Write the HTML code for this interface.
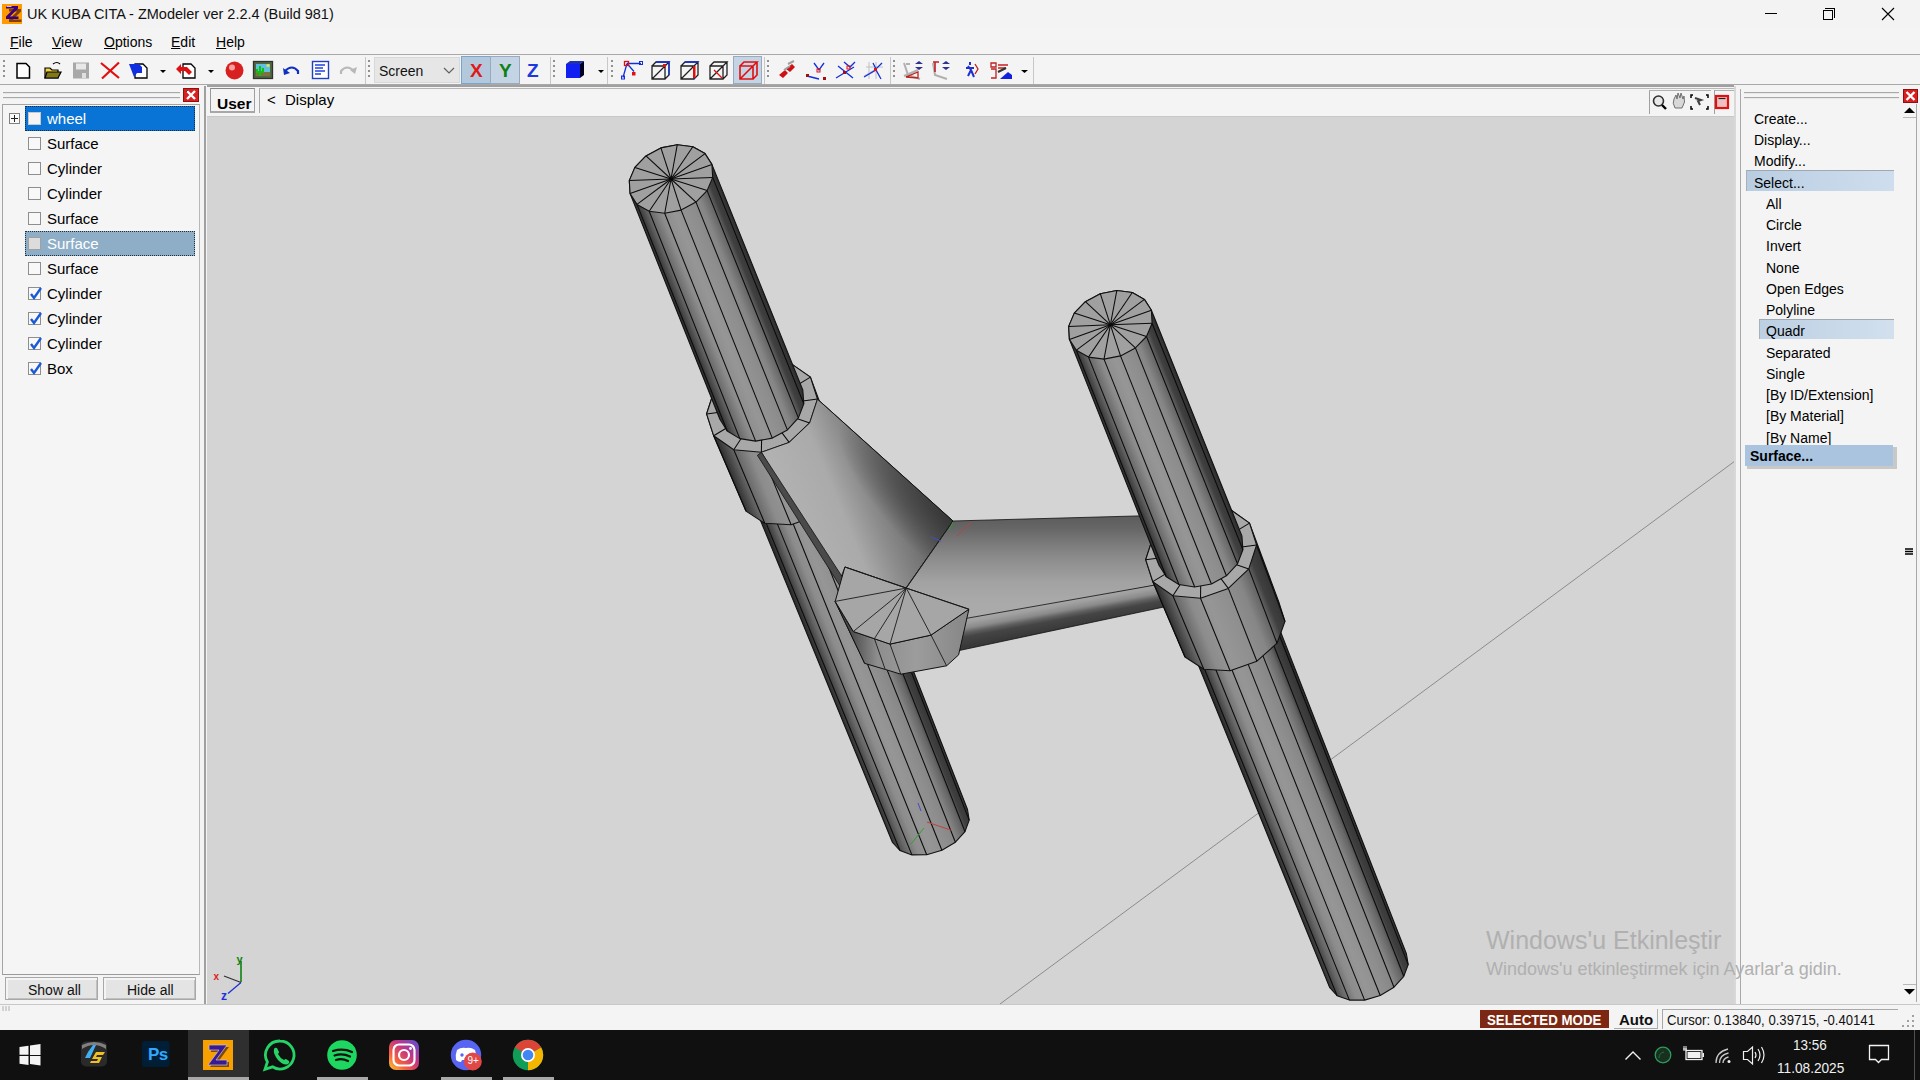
<!DOCTYPE html>
<html><head><meta charset="utf-8">
<style>
*{margin:0;padding:0;box-sizing:border-box}
html,body{width:1920px;height:1080px;overflow:hidden;background:#f4f4f4;font-family:"Liberation Sans",sans-serif;color:#000}
.a{position:absolute}
.t{position:absolute;white-space:nowrap;line-height:1}
#title{left:0;top:0;width:1920px;height:29px;background:#f3f3f3}
#menu{left:0;top:29px;width:1920px;height:26px;background:#f4f4f4;border-bottom:1px solid #a8a8a8}
#tool{left:0;top:55px;width:1920px;height:30px;background:#f4f4f4;border-bottom:1px solid #a8a8a8}
#left{left:0;top:86px;width:206px;height:918px;background:#f4f4f4;border-right:2px solid #a0a0a0}
#vp{left:207px;top:117px;width:1527px;height:887px;background:#d4d4d4;overflow:hidden}
#vphead{left:207px;top:85px;width:1527px;height:32px;background:#f4f4f4;border-top:2px solid #a0a0a0;border-bottom:1px solid #c8c8c8}
#right{left:1736px;top:86px;width:184px;height:918px;background:#f4f4f4}
#status{left:0;top:1004px;width:1920px;height:26px;background:#f4f4f4;border-top:1px solid #c8c8c8}
#task{left:0;top:1030px;width:1920px;height:50px;background:#101010}
.tree{font-size:15px}
.cb{position:absolute;width:13px;height:13px;border:1px solid #8e8e8e;background:#f8f8f8}
.rp{font-size:15px}
</style></head><body>

<!-- title bar -->
<div id="title" class="a">
  <svg class="a" style="left:2px;top:4px" width="20" height="20"><rect width="20" height="20" fill="#ff9a00"/><path d="M4 2h12v2.5l-8 8h8.5v2.5h-12.5v-2.5l8-8h-8z" fill="#804000" transform="translate(3,3)"/><path d="M4 2h12v2.5l-8 8h8.5v2.5h-12.5v-2.5l8-8h-8z" fill="#3a0080"/><path d="M4.5 2.5h5" stroke="#d8d8f0" stroke-width="0.9"/></svg>
  <div class="t" style="left:27px;top:7px;font-size:14.5px;color:#111">UK KUBA CITA - ZModeler ver 2.2.4 (Build 981)</div>
  <div class="a" style="left:1765px;top:13px;width:12px;height:1px;background:#000"></div>
  <div class="a" style="left:1823px;top:10px;width:10px;height:10px;border:1px solid #000"></div>
  <div class="a" style="left:1825px;top:8px;width:10px;height:10px;border-top:1px solid #000;border-right:1px solid #000"></div>
  <svg class="a" style="left:1881px;top:7px" width="14" height="14"><path d="M1 1L13 13M13 1L1 13" stroke="#000" stroke-width="1.1"/></svg>
</div>

<!-- menu -->
<div id="menu" class="a">
  <div class="t" style="left:10px;top:6px;font-size:14px"><u>F</u>ile</div>
  <div class="t" style="left:52px;top:6px;font-size:14px"><u>V</u>iew</div>
  <div class="t" style="left:104px;top:6px;font-size:14px"><u>O</u>ptions</div>
  <div class="t" style="left:171px;top:6px;font-size:14px"><u>E</u>dit</div>
  <div class="t" style="left:216px;top:6px;font-size:14px"><u>H</u>elp</div>
</div>

<!-- toolbar -->
<div id="tool" class="a">
<svg class="a" style="left:0;top:0" width="1100" height="30" viewBox="0 55 1100 30">
 <g fill="#909090">
  <rect x="3" y="60" width="2" height="2"/><rect x="3" y="65" width="2" height="2"/><rect x="3" y="70" width="2" height="2"/><rect x="3" y="75" width="2" height="2"/>
  <rect x="368" y="60" width="2" height="2"/><rect x="368" y="65" width="2" height="2"/><rect x="368" y="70" width="2" height="2"/><rect x="368" y="75" width="2" height="2"/>
  <rect x="553" y="60" width="2" height="2"/><rect x="553" y="65" width="2" height="2"/><rect x="553" y="70" width="2" height="2"/><rect x="553" y="75" width="2" height="2"/>
  <rect x="611" y="60" width="2" height="2"/><rect x="611" y="65" width="2" height="2"/><rect x="611" y="70" width="2" height="2"/><rect x="611" y="75" width="2" height="2"/>
  <rect x="767" y="60" width="2" height="2"/><rect x="767" y="65" width="2" height="2"/><rect x="767" y="70" width="2" height="2"/><rect x="767" y="75" width="2" height="2"/>
  <rect x="893" y="60" width="2" height="2"/><rect x="893" y="65" width="2" height="2"/><rect x="893" y="70" width="2" height="2"/><rect x="893" y="75" width="2" height="2"/>
 </g>
 <rect x="365" y="57" width="1" height="27" fill="#c8c8c8"/><rect x="550" y="57" width="1" height="27" fill="#c8c8c8"/><rect x="607" y="57" width="1" height="27" fill="#c8c8c8"/><rect x="764" y="57" width="1" height="27" fill="#c8c8c8"/><rect x="890" y="57" width="1" height="27" fill="#c8c8c8"/><rect x="1033" y="57" width="1" height="27" fill="#c8c8c8"/>
 <!-- new doc -->
 <path d="M17 63.5h9l3.5 3.5v11h-12.5z" fill="#fff" stroke="#000" stroke-width="1.5"/>
 <!-- open -->
 <path d="M45 68h5l2 2h6v8h-13z" fill="#f0d040" stroke="#000" stroke-width="1.2"/><path d="M47 72h14l-3 6h-13z" fill="#807818" stroke="#000" stroke-width="1.2"/><path d="M53 64q4-3 7 0" fill="none" stroke="#000" stroke-width="1.2"/>
 <!-- save gray -->
 <rect x="73" y="62.5" width="16" height="16" fill="#a8a8a8"/><rect x="76" y="63.5" width="10" height="6" fill="#e8e8e8"/><rect x="82" y="73" width="4" height="5" fill="#e0e0e0"/>
 <!-- red x -->
 <path d="M101 63l18 15M119 62.5l-17 16" stroke="#e01010" stroke-width="2.2"/>
 <!-- blue import -->
 <path d="M135 64h8l4 4v10h-12z" fill="#fff" stroke="#000" stroke-width="1.3"/><path d="M129 64h10l3 3v6h-5l-3 4z" fill="#1030e0"/>
 <path d="M160 70h6l-3 3z" fill="#000"/>
 <!-- red arrow doc -->
 <path d="M183 64h8l4 4v10h-12z" fill="#fff" stroke="#000" stroke-width="1.3"/><path d="M176 69l5-5v3h6l5 5-3 3-4-4h-4v3z" fill="#e01010"/>
 <path d="M208 70h6l-3 3z" fill="#000"/>
 <!-- red ball -->
 <circle cx="234.5" cy="70.5" r="9" fill="#d82020"/><circle cx="232" cy="67.5" r="3" fill="#f8a0a0"/>
 <!-- green image -->
 <rect x="253.5" y="61.5" width="19" height="17" fill="#506840" stroke="#303030" stroke-width="1.3"/><rect x="256" y="64" width="14" height="8" fill="#60c0e0"/><rect x="256" y="72" width="14" height="4" fill="#807040"/><path d="M260 76v-10M257 69v3h6v-4" stroke="#10c010" stroke-width="2" fill="none"/><circle cx="268" cy="65.5" r="1.6" fill="#f0e040"/>
 <!-- undo -->
 <path d="M285 71q7-7 13 0v3" fill="none" stroke="#1030c0" stroke-width="2.2"/><path d="M283 68l1 7 6-2z" fill="#1030c0"/>
 <!-- doc blue -->
 <rect x="312.5" y="61.5" width="16" height="17" fill="#fff" stroke="#2040c0" stroke-width="1.4"/><path d="M315 65h10M315 68h8M315 71h10M315 74h6" stroke="#2040e0" stroke-width="1.3"/>
 <!-- redo gray -->
 <path d="M354 71q-7-7-13 0v3" fill="none" stroke="#b8b8b8" stroke-width="2.2"/><path d="M357 67l-2 7-5-4z" fill="#b8b8b8"/>
 <!-- combo -->
 <rect x="374" y="57" width="86" height="26" fill="#e6e6e6"/><rect x="374.5" y="57.5" width="85" height="25" fill="none" stroke="#d8d8d8"/>
 <path d="M444 68l5 5 5-5" fill="none" stroke="#606060" stroke-width="1.2"/>
 <!-- xyz -->
 <rect x="461.5" y="56.5" width="29" height="27" fill="#b4c8dc" stroke="#7aa4d0"/><rect x="490.5" y="56.5" width="29" height="27" fill="#c4d4e4" stroke="#98aac0"/>
 <!-- blue cube -->
 <path d="M566 64h14v14h-14z" fill="#1020f0"/><path d="M566 64l4-3h14l-4 3z" fill="#2030b0"/><path d="M580 64l4-3v14l-4 3z" fill="#000020"/><path d="M598 70h6l-3 3z" fill="#000"/>
 <!-- vertex icon -->
 <path d="M627 63.5h14M627 63.5l-4 14M627 63.5l7 8" stroke="#1030e0" stroke-width="1.3" fill="none"/><rect x="624.5" y="61.5" width="4" height="4" fill="none" stroke="#e01010" stroke-width="1.3"/><rect x="639.5" y="61.5" width="3" height="3" fill="none" stroke="#1030e0"/><rect x="621.5" y="76" width="3" height="3" fill="none" stroke="#1030e0"/><rect x="632" y="72" width="3.5" height="3.5" fill="#e01010"/>
 <!-- cubes -->
 <g fill="none" stroke-width="1.3">
  <path d="M652 66h13v13h-13zM652 66l4-4h13l-4 4M669 62v13l-4 4M652 79l13-13" stroke="#202020"/>
  <path d="M656 62h13v13" stroke="#1030e0"/><rect x="663" y="64" width="3" height="3" fill="#e01010" stroke="none"/>
  <path d="M681 66h13v13h-13zM681 66l4-4h13l-4 4M698 62v13l-4 4M681 79l13-13" stroke="#202020"/>
  <path d="M685 62h13M694 66v13" stroke="#1030e0"/><rect x="693" y="66" width="2.5" height="12" fill="#e01010" stroke="none"/>
  <path d="M710 66h13v13h-13zM710 66l4-4h13l-4 4M727 62v13l-4 4M710 79l13-13" stroke="#202020"/><path d="M714 70l8 8" stroke="#e01010"/>
 </g>
 <rect x="733.5" y="56.5" width="28" height="27" fill="#c4d4e4" stroke="#98aac0"/>
 <path d="M740 66h13v13h-13zM740 66l4-4h13l-4 4M757 62v13l-4 4M740 79l13-13" stroke="#e01010" stroke-width="1.6" fill="none"/>
 <!-- magnet etc -->
 <path d="M779 75l6-5 3 3-5 5zM786 69l6-5 3 3-5 5z" fill="#d01010"/><path d="M788 64l6-3M784 70l6-4" stroke="#a0a0a0" stroke-width="2"/>
 <path d="M807 76l12 3M814 63l5 7 5-7" stroke="#1030e0" stroke-width="1.3" fill="none"/><rect x="806" y="74" width="3" height="3" fill="#a01010"/><rect x="823" y="77" width="3" height="3" fill="#a01010"/><rect x="817" y="69" width="3" height="3" fill="none" stroke="#e01010"/>
 <path d="M836 78l18-11M838 66l15 12M844 62l6 5 5-5" stroke="#1030e0" stroke-width="1.3" fill="none"/><rect x="847" y="66" width="3" height="3" fill="none" stroke="#e01010"/><rect x="843" y="71" width="3" height="3" fill="#a01010"/>
 <path d="M864 76l12-7M876 62v17M866 67h17M869 62v17" stroke="#c0c0c0" stroke-width="1"/><path d="M864 77l12-7 5 9M873 63l3 6 6-6" stroke="#1030e0" stroke-width="1.3" fill="none"/><rect x="874" y="68" width="3" height="3" fill="#e01010"/>
 <!-- last group -->
 <path d="M904 63l4 12 12 4M906 64h4M904 76l14-6" stroke="#b0b0b0" stroke-width="2" fill="none"/><path d="M906 77l12-5v6z" fill="none" stroke="#c02020" stroke-width="1.3"/><path d="M915 64l4-3 4 3zM915 67h8l-4 3z" fill="#303090"/>
 <path d="M933 63l2 12 12 4" stroke="#b0b0b0" stroke-width="2" fill="none"/><path d="M933 62h6M935 62v10" stroke="#c02020" stroke-width="1.6"/><path d="M942 64l4-3 4 3zM942 67h8l-4 3z" fill="#303090"/>
 <path d="M970 62v3M968 66l3 4-3 6M971 70l3 7M966 68h8" stroke="#2030d0" stroke-width="2" fill="none"/><path d="M975 64l3 5-3 5" stroke="#c02020" stroke-width="1.3" fill="none"/>
 <path d="M991 63h5v4h-5zM991 69h5v9h-5M998 65h10M998 68h8" stroke="#c02020" stroke-width="1.3" fill="none"/><path d="M1000 79l8-7 4 3v4z" fill="#1020e0"/><path d="M998 72l8-4" stroke="#303030" stroke-width="2"/>
 <path d="M1021 70h7l-3.5 3z" fill="#000"/>
</svg>
<div class="t" style="left:379px;top:9px;font-size:14px;color:#111">Screen</div>
<div class="t" style="left:470px;top:6px;font-size:19px;font-weight:bold;color:#e01818">X</div>
<div class="t" style="left:499px;top:6px;font-size:19px;font-weight:bold;color:#108010">Y</div>
<div class="t" style="left:527px;top:6px;font-size:19px;font-weight:bold;color:#2038e0">Z</div>
</div>

<!-- left panel -->
<div id="left" class="a">
 <div class="a" style="left:3px;top:6px;width:177px;height:2px;border-top:1px solid #a8a8a8;border-bottom:1px solid #e8e8e8"></div>
 <div class="a" style="left:3px;top:11px;width:177px;height:2px;border-top:1px solid #a8a8a8;border-bottom:1px solid #e8e8e8"></div>
 <svg class="a" style="left:183px;top:2px" width="17" height="15"><rect x="0.5" y="0.5" width="15" height="13" fill="#d82020" stroke="#901010"/><path d="M4 3l8 8M12 3l-8 8" stroke="#fff" stroke-width="2.4"/><path d="M3 4l2-2" stroke="#404040" stroke-width="1"/></svg>
 <div class="a" style="left:2px;top:18px;width:198px;height:871px;border:1px solid #a4a4a4;border-right-color:#b8b8b8;border-bottom-color:#9a9a9a;background:#f5f5f5"></div>
 <div class="a" style="left:9px;top:27px;width:11px;height:11px;border:1px solid #808080;background:#fafafa"></div>
 <div class="a" style="left:11px;top:32px;width:7px;height:1px;background:#202020"></div>
 <div class="a" style="left:14px;top:29px;width:1px;height:7px;background:#202020"></div>
 <div class="a" style="left:25px;top:20px;width:170px;height:25px;background:#0a74d6;border:1px dotted #1a2a40"></div>
 <div class="a" style="left:25px;top:145px;width:170px;height:25px;background:#8eaec8;border:1px dotted #203040"></div>
 <div class="tree">
  <div class="cb" style="left:28px;top:26px;background:#f4f4f4;border-color:#c8c8c8"></div>
  <div class="t" style="left:47px;top:25px;color:#fff">wheel</div>
  <div class="cb" style="left:28px;top:51px"></div><div class="t" style="left:47px;top:50px">Surface</div>
  <div class="cb" style="left:28px;top:76px"></div><div class="t" style="left:47px;top:75px">Cylinder</div>
  <div class="cb" style="left:28px;top:101px"></div><div class="t" style="left:47px;top:100px">Cylinder</div>
  <div class="cb" style="left:28px;top:126px"></div><div class="t" style="left:47px;top:125px">Surface</div>
  <div class="cb" style="left:28px;top:151px;background:#dcdcdc;border-color:#a0a0a0"></div><div class="t" style="left:47px;top:150px;color:#fff">Surface</div>
  <div class="cb" style="left:28px;top:176px"></div><div class="t" style="left:47px;top:175px">Surface</div>
  <div class="cb" style="left:28px;top:201px"></div><div class="t" style="left:47px;top:200px">Cylinder</div>
  <div class="cb" style="left:28px;top:226px"></div><div class="t" style="left:47px;top:225px">Cylinder</div>
  <div class="cb" style="left:28px;top:251px"></div><div class="t" style="left:47px;top:250px">Cylinder</div>
  <div class="cb" style="left:28px;top:276px"></div><div class="t" style="left:47px;top:275px">Box</div>
 </div>
 <svg class="a" style="left:28px;top:198px" width="16" height="100">
  <g fill="none" stroke="#1a5ad8" stroke-width="2.4"><path d="M3 10l3 4 7-10"/><path d="M3 35l3 4 7-10"/><path d="M3 60l3 4 7-10"/><path d="M3 85l3 4 7-10"/></g>
 </svg>
 <div class="a" style="left:5px;top:891px;width:93px;height:23px;border:1px solid #a8a8a8;background:#e4e4e4;box-shadow:inset 2px 2px 0 #f4f4f4, inset -1px -1px 0 #c0c0c0"></div>
 <div class="t" style="left:28px;top:897px;font-size:14px;color:#111">Show all</div>
 <div class="a" style="left:103px;top:891px;width:93px;height:23px;border:1px solid #a8a8a8;background:#e4e4e4;box-shadow:inset 2px 2px 0 #f4f4f4, inset -1px -1px 0 #c0c0c0"></div>
 <div class="t" style="left:127px;top:897px;font-size:14px;color:#111">Hide all</div>
</div>

<!-- viewport header -->
<div id="vphead" class="a">
 <div class="a" style="left:3px;top:1px;width:45px;height:25px;border:1px solid #b0b0b0;border-top-color:#888;border-left-color:#999;border-right-color:#a0a0a0;border-bottom:2px solid #a8a8a8"></div>
 <div class="t" style="left:10px;top:9px;font-size:15.5px;font-weight:bold">User</div>
 <div class="a" style="left:52px;top:1px;width:1480px;height:25px;border-left:1px solid #a8a8a8;border-top:1px solid #b8b8b8"></div>
 <div class="t" style="left:60px;top:5px;font-size:15px">&lt;</div>
 <div class="t" style="left:78px;top:5px;font-size:15px">Display</div>
 <div class="a" style="left:1442px;top:3px;width:1px;height:24px;background:#a0a0a0"></div><div class="a" style="left:1442px;top:3px;width:62px;height:1px;background:#b0b0b0"></div><div class="a" style="left:1507px;top:3px;width:20px;height:1px;background:#b0b0b0"></div>
 <div class="a" style="left:1507px;top:3px;width:1px;height:24px;background:#a0a0a0"></div>
 <svg class="a" style="left:1445px;top:5px" width="90" height="24" viewBox="1652 91 90 24">
  <circle cx="1658.5" cy="100" r="5" fill="#e8e8e8" stroke="#303030" stroke-width="1.6"/><path d="M1662 104l4 4" stroke="#000" stroke-width="2.4"/>
  <path d="M1675 107q-3-5-1-9l2-4 1 4 1-6 2 5 1-5 2 6 1-3q2 6-2 12z" fill="#d8d8d8" stroke="#707070" stroke-width="1"/>
  <path d="M1693 94h-2v3M1706 94h2v3M1693 108h-2v-3M1706 108h2v-3" stroke="#000" stroke-width="1.5" fill="none"/><path d="M1695 97l6 2-3 1 2 4" stroke="#404040" stroke-width="2" fill="none"/>
  <rect x="1716" y="95" width="12" height="12" fill="#f0c0c0" stroke="#e01010" stroke-width="2.2"/><path d="M1718.5 97.5h7" stroke="#202020" stroke-width="1.2"/>
 </svg>
</div>

<!-- viewport -->
<div id="vp" class="a"><svg class="a" style="left:0;top:0" width="1527" height="887" viewBox="207 117 1527 887"><defs><linearGradient id="g1" gradientUnits="userSpaceOnUse" x1="822.4" y1="671.5" x2="901.3" y2="639.9"><stop offset="0.000" stop-color="#2a2a2a"/><stop offset="0.040" stop-color="#3e3e3e"/><stop offset="0.120" stop-color="#666666"/><stop offset="0.250" stop-color="#8c8c8c"/><stop offset="0.400" stop-color="#969696"/><stop offset="0.600" stop-color="#8e8e8e"/><stop offset="0.720" stop-color="#868686"/><stop offset="0.830" stop-color="#666666"/><stop offset="0.890" stop-color="#404040"/><stop offset="0.970" stop-color="#363636"/><stop offset="1.000" stop-color="#2a2a2a"/></linearGradient><linearGradient id="g2" gradientUnits="userSpaceOnUse" x1="725.5" y1="465.8" x2="829.5" y2="424.2"><stop offset="0.000" stop-color="#2a2a2a"/><stop offset="0.040" stop-color="#3e3e3e"/><stop offset="0.120" stop-color="#666666"/><stop offset="0.250" stop-color="#8c8c8c"/><stop offset="0.400" stop-color="#969696"/><stop offset="0.600" stop-color="#8e8e8e"/><stop offset="0.720" stop-color="#868686"/><stop offset="0.830" stop-color="#666666"/><stop offset="0.890" stop-color="#404040"/><stop offset="0.970" stop-color="#363636"/><stop offset="1.000" stop-color="#2a2a2a"/></linearGradient><linearGradient id="g3" gradientUnits="userSpaceOnUse" x1="675.5" y1="308.1" x2="756.8" y2="275.5"><stop offset="0.000" stop-color="#2a2a2a"/><stop offset="0.040" stop-color="#3e3e3e"/><stop offset="0.120" stop-color="#666666"/><stop offset="0.250" stop-color="#8c8c8c"/><stop offset="0.400" stop-color="#969696"/><stop offset="0.600" stop-color="#8e8e8e"/><stop offset="0.720" stop-color="#868686"/><stop offset="0.830" stop-color="#666666"/><stop offset="0.890" stop-color="#404040"/><stop offset="0.970" stop-color="#363636"/><stop offset="1.000" stop-color="#2a2a2a"/></linearGradient><linearGradient id="g4" gradientUnits="userSpaceOnUse" x1="953.0" y1="521.0" x2="805.0" y2="581.8"><stop offset="0.000" stop-color="#505050"/><stop offset="0.250" stop-color="#707070"/><stop offset="0.440" stop-color="#8c8c8c"/><stop offset="0.620" stop-color="#aaaaaa"/><stop offset="1.000" stop-color="#b4b4b4"/></linearGradient><radialGradient id="g5" gradientUnits="userSpaceOnUse" cx="0" cy="0" r="1" gradientTransform="translate(953,521) rotate(222.8) scale(150,48)"><stop offset="0" stop-color="#343434" stop-opacity="0.95"/><stop offset="0.5" stop-color="#3a3a3a" stop-opacity="0.55"/><stop offset="1" stop-color="#3a3a3a" stop-opacity="0"/></radialGradient><linearGradient id="g6" gradientUnits="userSpaceOnUse" x1="1050.0" y1="518.0" x2="1050.0" y2="603.0"><stop offset="0.000" stop-color="#5e5e5e"/><stop offset="0.120" stop-color="#666666"/><stop offset="0.300" stop-color="#7a7a7a"/><stop offset="0.450" stop-color="#8a8a8a"/><stop offset="0.600" stop-color="#969696"/><stop offset="0.750" stop-color="#a2a2a2"/><stop offset="1.000" stop-color="#aaaaaa"/></linearGradient><linearGradient id="g7" gradientUnits="userSpaceOnUse" x1="1050.0" y1="603.0" x2="1055.0" y2="630.5"><stop offset="0.000" stop-color="#a8a8a8"/><stop offset="0.150" stop-color="#a0a0a0"/><stop offset="0.350" stop-color="#8a8a8a"/><stop offset="0.500" stop-color="#606060"/><stop offset="0.650" stop-color="#454545"/><stop offset="1.000" stop-color="#383838"/></linearGradient><linearGradient id="g8" gradientUnits="userSpaceOnUse" x1="850.0" y1="650.0" x2="960.0" y2="650.0"><stop offset="0.000" stop-color="#4a4a4a"/><stop offset="0.250" stop-color="#8e8e8e"/><stop offset="0.600" stop-color="#9c9c9c"/><stop offset="1.000" stop-color="#8a8a8a"/></linearGradient><linearGradient id="g9" gradientUnits="userSpaceOnUse" x1="1260.2" y1="817.0" x2="1340.5" y2="784.9"><stop offset="0.000" stop-color="#2a2a2a"/><stop offset="0.040" stop-color="#3e3e3e"/><stop offset="0.120" stop-color="#666666"/><stop offset="0.250" stop-color="#8c8c8c"/><stop offset="0.400" stop-color="#969696"/><stop offset="0.600" stop-color="#8e8e8e"/><stop offset="0.720" stop-color="#868686"/><stop offset="0.830" stop-color="#666666"/><stop offset="0.890" stop-color="#404040"/><stop offset="0.970" stop-color="#363636"/><stop offset="1.000" stop-color="#2a2a2a"/></linearGradient><linearGradient id="g10" gradientUnits="userSpaceOnUse" x1="1164.5" y1="611.7" x2="1268.6" y2="570.2"><stop offset="0.000" stop-color="#2a2a2a"/><stop offset="0.040" stop-color="#3e3e3e"/><stop offset="0.120" stop-color="#666666"/><stop offset="0.250" stop-color="#8c8c8c"/><stop offset="0.400" stop-color="#969696"/><stop offset="0.600" stop-color="#8e8e8e"/><stop offset="0.720" stop-color="#868686"/><stop offset="0.830" stop-color="#666666"/><stop offset="0.890" stop-color="#404040"/><stop offset="0.970" stop-color="#363636"/><stop offset="1.000" stop-color="#2a2a2a"/></linearGradient><linearGradient id="g11" gradientUnits="userSpaceOnUse" x1="1114.8" y1="453.9" x2="1196.1" y2="421.4"><stop offset="0.000" stop-color="#2a2a2a"/><stop offset="0.040" stop-color="#3e3e3e"/><stop offset="0.120" stop-color="#666666"/><stop offset="0.250" stop-color="#8c8c8c"/><stop offset="0.400" stop-color="#969696"/><stop offset="0.600" stop-color="#8e8e8e"/><stop offset="0.720" stop-color="#868686"/><stop offset="0.830" stop-color="#666666"/><stop offset="0.890" stop-color="#404040"/><stop offset="0.970" stop-color="#363636"/><stop offset="1.000" stop-color="#2a2a2a"/></linearGradient></defs><line x1="1000.0" y1="1004.0" x2="1735.0" y2="461.0" stroke="#8c8c8c" stroke-width="1.0"/><polygon points="751.4,491.4 755.9,478.9 766.1,467.3 780.5,458.4 796.9,453.7 812.8,453.8 825.8,458.7 833.9,467.6 967.5,809.5 969.2,820.1 965.0,831.6 955.4,842.2 941.9,850.3 926.7,854.8 911.9,854.9 899.9,850.5 892.5,842.5 753.4,503.1" fill="url(#g1)" stroke="#111" stroke-width="1.1" stroke-linejoin="round"/><line x1="835.9" y1="479.3" x2="969.2" y2="820.1" stroke="#0a0a0a" stroke-width="1.05"/><line x1="831.4" y1="491.9" x2="965.0" y2="831.6" stroke="#0a0a0a" stroke-width="1.05"/><line x1="821.2" y1="503.5" x2="955.4" y2="842.2" stroke="#0a0a0a" stroke-width="1.05"/><line x1="806.8" y1="512.3" x2="941.9" y2="850.3" stroke="#0a0a0a" stroke-width="1.05"/><line x1="790.4" y1="517.0" x2="926.7" y2="854.8" stroke="#0a0a0a" stroke-width="1.05"/><line x1="774.5" y1="516.9" x2="911.9" y2="854.9" stroke="#0a0a0a" stroke-width="1.05"/><line x1="761.5" y1="512.0" x2="899.9" y2="850.5" stroke="#0a0a0a" stroke-width="1.05"/><polygon points="706.6,413.9 714.4,390.0 734.9,370.5 762.7,360.7 790.3,363.1 810.4,377.1 839.8,455.9 846.0,475.4 838.0,497.1 817.9,515.2 791.1,524.8 764.8,523.3 746.0,511.1 713.7,435.8" fill="url(#g2)" stroke="#111" stroke-width="1.1" stroke-linejoin="round"/><line x1="817.5" y1="399.1" x2="846.0" y2="475.4" stroke="#0a0a0a" stroke-width="1.05"/><line x1="809.7" y1="422.9" x2="838.0" y2="497.1" stroke="#0a0a0a" stroke-width="1.05"/><line x1="789.2" y1="442.4" x2="817.9" y2="515.2" stroke="#0a0a0a" stroke-width="1.05"/><line x1="761.4" y1="452.3" x2="791.1" y2="524.8" stroke="#0a0a0a" stroke-width="1.05"/><line x1="733.8" y1="449.8" x2="764.8" y2="523.3" stroke="#0a0a0a" stroke-width="1.05"/><line x1="713.7" y1="435.8" x2="746.0" y2="511.1" stroke="#0a0a0a" stroke-width="1.05"/><polygon points="817.5,399.1 809.7,422.9 789.2,442.4 761.4,452.3 733.8,449.8 713.7,435.8 706.6,413.9 714.4,390.0 734.9,370.5 762.7,360.7 790.3,363.1 810.4,377.1" fill="#a8a8a8" stroke="#111" stroke-width="1.1" stroke-linejoin="round"/><line x1="762.1" y1="406.5" x2="817.5" y2="399.1" stroke="#0a0a0a" stroke-width="1.05"/><line x1="762.1" y1="406.5" x2="809.7" y2="422.9" stroke="#0a0a0a" stroke-width="1.05"/><line x1="762.1" y1="406.5" x2="789.2" y2="442.4" stroke="#0a0a0a" stroke-width="1.05"/><line x1="762.1" y1="406.5" x2="761.4" y2="452.3" stroke="#0a0a0a" stroke-width="1.05"/><line x1="762.1" y1="406.5" x2="733.8" y2="449.8" stroke="#0a0a0a" stroke-width="1.05"/><line x1="762.1" y1="406.5" x2="713.7" y2="435.8" stroke="#0a0a0a" stroke-width="1.05"/><line x1="762.1" y1="406.5" x2="706.6" y2="413.9" stroke="#0a0a0a" stroke-width="1.05"/><line x1="762.1" y1="406.5" x2="714.4" y2="390.0" stroke="#0a0a0a" stroke-width="1.05"/><line x1="762.1" y1="406.5" x2="734.9" y2="370.5" stroke="#0a0a0a" stroke-width="1.05"/><line x1="762.1" y1="406.5" x2="762.7" y2="360.7" stroke="#0a0a0a" stroke-width="1.05"/><line x1="762.1" y1="406.5" x2="790.3" y2="363.1" stroke="#0a0a0a" stroke-width="1.05"/><line x1="762.1" y1="406.5" x2="810.4" y2="377.1" stroke="#0a0a0a" stroke-width="1.05"/><polygon points="629.3,180.6 634.9,167.4 646.0,155.9 660.9,147.9 677.3,144.7 692.8,146.7 705.0,153.6 711.9,164.4 802.8,389.9 803.8,403.8 798.4,417.9 787.4,429.9 772.3,438.1 755.6,441.1 739.8,438.6 727.2,431.0 719.9,419.3 630.1,193.6" fill="url(#g3)" stroke="#111" stroke-width="1.1" stroke-linejoin="round"/><line x1="712.7" y1="177.4" x2="803.8" y2="403.8" stroke="#0a0a0a" stroke-width="1.05"/><line x1="707.1" y1="190.6" x2="798.4" y2="417.9" stroke="#0a0a0a" stroke-width="1.05"/><line x1="696.0" y1="202.1" x2="787.4" y2="429.9" stroke="#0a0a0a" stroke-width="1.05"/><line x1="681.1" y1="210.1" x2="772.3" y2="438.1" stroke="#0a0a0a" stroke-width="1.05"/><line x1="664.7" y1="213.3" x2="755.6" y2="441.1" stroke="#0a0a0a" stroke-width="1.05"/><line x1="649.2" y1="211.3" x2="739.8" y2="438.6" stroke="#0a0a0a" stroke-width="1.05"/><line x1="637.0" y1="204.4" x2="727.2" y2="431.0" stroke="#0a0a0a" stroke-width="1.05"/><polygon points="711.9,164.4 712.7,177.4 707.1,190.6 696.0,202.1 681.1,210.1 664.7,213.3 649.2,211.3 637.0,204.4 630.1,193.6 629.3,180.6 634.9,167.4 646.0,155.9 660.9,147.9 677.3,144.7 692.8,146.7 705.0,153.6" fill="#a0a0a0" stroke="#111" stroke-width="1.1" stroke-linejoin="round"/><line x1="671.0" y1="179.0" x2="711.9" y2="164.4" stroke="#0a0a0a" stroke-width="1.05"/><line x1="671.0" y1="179.0" x2="712.7" y2="177.4" stroke="#0a0a0a" stroke-width="1.05"/><line x1="671.0" y1="179.0" x2="707.1" y2="190.6" stroke="#0a0a0a" stroke-width="1.05"/><line x1="671.0" y1="179.0" x2="696.0" y2="202.1" stroke="#0a0a0a" stroke-width="1.05"/><line x1="671.0" y1="179.0" x2="681.1" y2="210.1" stroke="#0a0a0a" stroke-width="1.05"/><line x1="671.0" y1="179.0" x2="664.7" y2="213.3" stroke="#0a0a0a" stroke-width="1.05"/><line x1="671.0" y1="179.0" x2="649.2" y2="211.3" stroke="#0a0a0a" stroke-width="1.05"/><line x1="671.0" y1="179.0" x2="637.0" y2="204.4" stroke="#0a0a0a" stroke-width="1.05"/><line x1="671.0" y1="179.0" x2="630.1" y2="193.6" stroke="#0a0a0a" stroke-width="1.05"/><line x1="671.0" y1="179.0" x2="629.3" y2="180.6" stroke="#0a0a0a" stroke-width="1.05"/><line x1="671.0" y1="179.0" x2="634.9" y2="167.4" stroke="#0a0a0a" stroke-width="1.05"/><line x1="671.0" y1="179.0" x2="646.0" y2="155.9" stroke="#0a0a0a" stroke-width="1.05"/><line x1="671.0" y1="179.0" x2="660.9" y2="147.9" stroke="#0a0a0a" stroke-width="1.05"/><line x1="671.0" y1="179.0" x2="677.3" y2="144.7" stroke="#0a0a0a" stroke-width="1.05"/><line x1="671.0" y1="179.0" x2="692.8" y2="146.7" stroke="#0a0a0a" stroke-width="1.05"/><line x1="671.0" y1="179.0" x2="705.0" y2="153.6" stroke="#0a0a0a" stroke-width="1.05"/><polygon points="817.5,399.1 953.0,521.0 906.0,588.0 845.0,567.0 839.0,582.0 761.4,452.3 789.2,442.4 809.7,422.9" fill="url(#g4)" stroke="#111" stroke-width="0.8" stroke-linejoin="round" /><polygon points="817.5,399.1 953.0,521.0 906.0,588.0 845.0,567.0 839.0,582.0 761.4,452.3 789.2,442.4 809.7,422.9" fill="url(#g5)"/><line x1="817.5" y1="399.1" x2="953.0" y2="521.0" stroke="#111" stroke-width="0.9"/><polygon points="757.4,455.3 761.4,452.3 843.0,578.0 840.0,586.0" fill="#4a4a4a" stroke="#111" stroke-width="0.8" stroke-linejoin="round" /><polygon points="953.0,521.0 1172.0,515.0 1178.0,581.0 933.0,627.0 906.0,588.0" fill="url(#g6)" stroke="#111" stroke-width="0.8" stroke-linejoin="round" /><polygon points="940.0,623.0 1178.0,581.0 1178.0,604.0 957.0,651.0" fill="url(#g7)" stroke="#111" stroke-width="0.8" stroke-linejoin="round" /><polygon points="835.2,601.4 853.3,631.5 864.7,663.4" fill="#444444" stroke="#111" stroke-width="1.0" stroke-linejoin="round" /><polygon points="835.2,601.4 853.3,631.5 874.4,638.7 890.0,644.1 931.0,635.1 968.9,609.2 958.6,654.9 946.6,665.8 900.8,674.2 885.2,669.4 864.7,663.4" fill="url(#g8)" stroke="#111" stroke-width="1.0" stroke-linejoin="round" /><line x1="874.4" y1="638.7" x2="885.2" y2="669.4" stroke="#1a1a1a" stroke-width="0.9"/><line x1="890.0" y1="644.1" x2="900.8" y2="674.2" stroke="#1a1a1a" stroke-width="0.9"/><line x1="931.0" y1="635.1" x2="946.6" y2="665.8" stroke="#1a1a1a" stroke-width="0.9"/><polygon points="906.3,588.1 844.9,567.0 835.2,601.4 853.3,631.5 874.4,638.7 890.0,644.1 931.0,635.1 968.9,609.2" fill="#a6a6a6" stroke="#111" stroke-width="1.0" stroke-linejoin="round" /><line x1="906.3" y1="588.1" x2="844.9" y2="567.0" stroke="#1a1a1a" stroke-width="0.9"/><line x1="906.3" y1="588.1" x2="835.2" y2="601.4" stroke="#1a1a1a" stroke-width="0.9"/><line x1="906.3" y1="588.1" x2="853.3" y2="631.5" stroke="#1a1a1a" stroke-width="0.9"/><line x1="906.3" y1="588.1" x2="874.4" y2="638.7" stroke="#1a1a1a" stroke-width="0.9"/><line x1="906.3" y1="588.1" x2="890.0" y2="644.1" stroke="#1a1a1a" stroke-width="0.9"/><line x1="906.3" y1="588.1" x2="931.0" y2="635.1" stroke="#1a1a1a" stroke-width="0.9"/><line x1="906.3" y1="588.1" x2="968.9" y2="609.2" stroke="#1a1a1a" stroke-width="0.9"/><line x1="906.3" y1="588.1" x2="953.0" y2="521.0" stroke="#1a1a1a" stroke-width="0.9"/><polygon points="1190.0,637.4 1194.5,624.7 1204.8,613.0 1219.4,604.1 1236.0,599.3 1252.1,599.4 1265.2,604.4 1273.4,613.4 1406.4,953.8 1408.2,964.6 1403.8,976.3 1394.0,987.2 1380.2,995.5 1364.6,1000.1 1349.4,1000.1 1337.1,995.7 1329.6,987.4 1191.9,649.2" fill="url(#g9)" stroke="#111" stroke-width="1.1" stroke-linejoin="round"/><line x1="1275.4" y1="625.2" x2="1408.2" y2="964.6" stroke="#0a0a0a" stroke-width="1.05"/><line x1="1270.8" y1="637.9" x2="1403.8" y2="976.3" stroke="#0a0a0a" stroke-width="1.05"/><line x1="1260.5" y1="649.6" x2="1394.0" y2="987.2" stroke="#0a0a0a" stroke-width="1.05"/><line x1="1245.9" y1="658.6" x2="1380.2" y2="995.5" stroke="#0a0a0a" stroke-width="1.05"/><line x1="1229.3" y1="663.3" x2="1364.6" y2="1000.1" stroke="#0a0a0a" stroke-width="1.05"/><line x1="1213.2" y1="663.2" x2="1349.4" y2="1000.1" stroke="#0a0a0a" stroke-width="1.05"/><line x1="1200.1" y1="658.3" x2="1337.1" y2="995.7" stroke="#0a0a0a" stroke-width="1.05"/><polygon points="1145.7,559.7 1153.5,535.8 1174.0,516.4 1201.9,506.6 1229.5,509.0 1249.5,523.1 1278.8,601.9 1285.0,621.4 1277.0,643.2 1256.9,661.2 1230.1,670.7 1203.8,669.2 1185.0,657.0 1152.8,581.6" fill="url(#g10)" stroke="#111" stroke-width="1.1" stroke-linejoin="round"/><line x1="1256.6" y1="545.0" x2="1285.0" y2="621.4" stroke="#0a0a0a" stroke-width="1.05"/><line x1="1248.8" y1="568.9" x2="1277.0" y2="643.2" stroke="#0a0a0a" stroke-width="1.05"/><line x1="1228.3" y1="588.4" x2="1256.9" y2="661.2" stroke="#0a0a0a" stroke-width="1.05"/><line x1="1200.5" y1="598.2" x2="1230.1" y2="670.7" stroke="#0a0a0a" stroke-width="1.05"/><line x1="1172.9" y1="595.7" x2="1203.8" y2="669.2" stroke="#0a0a0a" stroke-width="1.05"/><line x1="1152.8" y1="581.6" x2="1185.0" y2="657.0" stroke="#0a0a0a" stroke-width="1.05"/><polygon points="1256.6,545.0 1248.8,568.9 1228.3,588.4 1200.5,598.2 1172.9,595.7 1152.8,581.6 1145.7,559.7 1153.5,535.8 1174.0,516.4 1201.9,506.6 1229.5,509.0 1249.5,523.1" fill="#a8a8a8" stroke="#111" stroke-width="1.1" stroke-linejoin="round"/><line x1="1201.2" y1="552.4" x2="1256.6" y2="545.0" stroke="#0a0a0a" stroke-width="1.05"/><line x1="1201.2" y1="552.4" x2="1248.8" y2="568.9" stroke="#0a0a0a" stroke-width="1.05"/><line x1="1201.2" y1="552.4" x2="1228.3" y2="588.4" stroke="#0a0a0a" stroke-width="1.05"/><line x1="1201.2" y1="552.4" x2="1200.5" y2="598.2" stroke="#0a0a0a" stroke-width="1.05"/><line x1="1201.2" y1="552.4" x2="1172.9" y2="595.7" stroke="#0a0a0a" stroke-width="1.05"/><line x1="1201.2" y1="552.4" x2="1152.8" y2="581.6" stroke="#0a0a0a" stroke-width="1.05"/><line x1="1201.2" y1="552.4" x2="1145.7" y2="559.7" stroke="#0a0a0a" stroke-width="1.05"/><line x1="1201.2" y1="552.4" x2="1153.5" y2="535.8" stroke="#0a0a0a" stroke-width="1.05"/><line x1="1201.2" y1="552.4" x2="1174.0" y2="516.4" stroke="#0a0a0a" stroke-width="1.05"/><line x1="1201.2" y1="552.4" x2="1201.9" y2="506.6" stroke="#0a0a0a" stroke-width="1.05"/><line x1="1201.2" y1="552.4" x2="1229.5" y2="509.0" stroke="#0a0a0a" stroke-width="1.05"/><line x1="1201.2" y1="552.4" x2="1249.5" y2="523.1" stroke="#0a0a0a" stroke-width="1.05"/><polygon points="1068.7,326.4 1074.3,313.1 1085.4,301.7 1100.3,293.7 1116.8,290.5 1132.3,292.5 1144.4,299.4 1151.4,310.2 1241.9,535.9 1242.9,549.8 1237.5,563.8 1226.4,575.8 1211.4,584.0 1194.7,587.0 1178.9,584.5 1166.3,576.8 1159.0,565.2 1069.4,339.4" fill="url(#g11)" stroke="#111" stroke-width="1.1" stroke-linejoin="round"/><line x1="1152.1" y1="323.2" x2="1242.9" y2="549.8" stroke="#0a0a0a" stroke-width="1.05"/><line x1="1146.5" y1="336.5" x2="1237.5" y2="563.8" stroke="#0a0a0a" stroke-width="1.05"/><line x1="1135.4" y1="347.9" x2="1226.4" y2="575.8" stroke="#0a0a0a" stroke-width="1.05"/><line x1="1120.5" y1="355.9" x2="1211.4" y2="584.0" stroke="#0a0a0a" stroke-width="1.05"/><line x1="1104.0" y1="359.1" x2="1194.7" y2="587.0" stroke="#0a0a0a" stroke-width="1.05"/><line x1="1088.5" y1="357.1" x2="1178.9" y2="584.5" stroke="#0a0a0a" stroke-width="1.05"/><line x1="1076.4" y1="350.2" x2="1166.3" y2="576.8" stroke="#0a0a0a" stroke-width="1.05"/><polygon points="1151.4,310.2 1152.1,323.2 1146.5,336.5 1135.4,347.9 1120.5,355.9 1104.0,359.1 1088.5,357.1 1076.4,350.2 1069.4,339.4 1068.7,326.4 1074.3,313.1 1085.4,301.7 1100.3,293.7 1116.8,290.5 1132.3,292.5 1144.4,299.4" fill="#a0a0a0" stroke="#111" stroke-width="1.1" stroke-linejoin="round"/><line x1="1110.4" y1="324.8" x2="1151.4" y2="310.2" stroke="#0a0a0a" stroke-width="1.05"/><line x1="1110.4" y1="324.8" x2="1152.1" y2="323.2" stroke="#0a0a0a" stroke-width="1.05"/><line x1="1110.4" y1="324.8" x2="1146.5" y2="336.5" stroke="#0a0a0a" stroke-width="1.05"/><line x1="1110.4" y1="324.8" x2="1135.4" y2="347.9" stroke="#0a0a0a" stroke-width="1.05"/><line x1="1110.4" y1="324.8" x2="1120.5" y2="355.9" stroke="#0a0a0a" stroke-width="1.05"/><line x1="1110.4" y1="324.8" x2="1104.0" y2="359.1" stroke="#0a0a0a" stroke-width="1.05"/><line x1="1110.4" y1="324.8" x2="1088.5" y2="357.1" stroke="#0a0a0a" stroke-width="1.05"/><line x1="1110.4" y1="324.8" x2="1076.4" y2="350.2" stroke="#0a0a0a" stroke-width="1.05"/><line x1="1110.4" y1="324.8" x2="1069.4" y2="339.4" stroke="#0a0a0a" stroke-width="1.05"/><line x1="1110.4" y1="324.8" x2="1068.7" y2="326.4" stroke="#0a0a0a" stroke-width="1.05"/><line x1="1110.4" y1="324.8" x2="1074.3" y2="313.1" stroke="#0a0a0a" stroke-width="1.05"/><line x1="1110.4" y1="324.8" x2="1085.4" y2="301.7" stroke="#0a0a0a" stroke-width="1.05"/><line x1="1110.4" y1="324.8" x2="1100.3" y2="293.7" stroke="#0a0a0a" stroke-width="1.05"/><line x1="1110.4" y1="324.8" x2="1116.8" y2="290.5" stroke="#0a0a0a" stroke-width="1.05"/><line x1="1110.4" y1="324.8" x2="1132.3" y2="292.5" stroke="#0a0a0a" stroke-width="1.05"/><line x1="1110.4" y1="324.8" x2="1144.4" y2="299.4" stroke="#0a0a0a" stroke-width="1.05"/><path d="M918 803l3 8" stroke="#4050c0" stroke-width="1"/><path d="M927 822l25 8.5" stroke="#c04040" stroke-width="1"/><path d="M911 844l13-16" stroke="#30a030" stroke-width="1"/><path d="M931 537l10 4" stroke="#4050c0" stroke-width="1"/><path d="M957 536l14.5-14" stroke="#c04040" stroke-width="1"/><path d="M949 530l4-8" stroke="#30a030" stroke-width="1"/><path d="M241 961v21" stroke="#108010" stroke-width="1.6"/><path d="M224 976l17 6.5" stroke="#303030" stroke-width="1.2"/><path d="M241 982.5l-13 11" stroke="#2030d0" stroke-width="1.3"/><text x="236.5" y="963" font-family="Liberation Sans" font-size="11" font-weight="bold" fill="#108010">y</text><text x="213.5" y="980" font-family="Liberation Sans" font-size="10" font-weight="bold" fill="#e02020">x</text><text x="221" y="999.5" font-family="Liberation Sans" font-size="12" font-weight="bold" fill="#2030e0">z</text></svg></div>

<!-- right panel -->
<div id="right" class="a">
 <div class="a" style="left:-2px;top:0;width:2px;height:918px;background:#d8d8d8"></div>
 <div class="a" style="left:4px;top:3px;width:1px;height:915px;background:#a8a8a8"></div>
 <div class="a" style="left:8px;top:6px;width:155px;height:2px;border-top:1px solid #a8a8a8;border-bottom:1px solid #e8e8e8"></div>
 <div class="a" style="left:8px;top:11px;width:155px;height:2px;border-top:1px solid #a8a8a8;border-bottom:1px solid #e8e8e8"></div>
 <svg class="a" style="left:167px;top:3px" width="16" height="14"><rect x="0.5" y="0.5" width="14" height="13" fill="#d82020" stroke="#901010"/><path d="M3.5 3l8 8M11.5 3l-8 8" stroke="#fff" stroke-width="2.4"/></svg>
 <div class="a" style="left:180px;top:18px;width:1px;height:898px;background:#a8a8a8"></div>
 <div class="a" style="left:167px;top:31px;width:13px;height:1px;background:#b8b8b8"></div>
 <svg class="a" style="left:167px;top:20px" width="13" height="8"><path d="M1 7l5.5-5.5 5.5 5.5z" fill="#000"/></svg>
 <svg class="a" style="left:168px;top:462px" width="10" height="8"><path d="M1 1h8M1 3.5h8M1 6h8" stroke="#000" stroke-width="1.3"/></svg>
 <div class="a" style="left:167px;top:898px;width:13px;height:1px;background:#b8b8b8"></div>
 <svg class="a" style="left:167px;top:902px" width="13" height="8"><path d="M1 1l5.5 5.5 5.5-5.5z" fill="#000"/></svg>
 <div class="a" style="left:10px;top:84px;width:148px;height:21px;background:linear-gradient(90deg,#b9cde2,#cfdeee);border-top:1px solid #a0a8b0;border-left:1px solid #a8b0b8"></div>
 <div class="a" style="left:23px;top:233px;width:135px;height:20px;background:linear-gradient(90deg,#bccfe3,#d2e0ee);border-top:1px solid #a0a8b0;border-left:1px solid #a8b0b8"></div>
 <div class="a" style="left:11px;top:361px;width:150px;height:22px;background:#c8c8c8"></div>
 <div class="a" style="left:9px;top:359px;width:148px;height:21px;background:#aac4df"></div>
 <div class="rp">
  <div class="t" style="left:18px;top:26px;font-size:14px">Create...</div>
  <div class="t" style="left:18px;top:47px;font-size:14px">Display...</div>
  <div class="t" style="left:18px;top:68px;font-size:14px">Modify...</div>
  <div class="t" style="left:18px;top:90px;font-size:14px">Select...</div>
  <div class="t" style="left:30px;top:111px;font-size:14px">All</div>
  <div class="t" style="left:30px;top:132px;font-size:14px">Circle</div>
  <div class="t" style="left:30px;top:153px;font-size:14px">Invert</div>
  <div class="t" style="left:30px;top:175px;font-size:14px">None</div>
  <div class="t" style="left:30px;top:196px;font-size:14px">Open Edges</div>
  <div class="t" style="left:30px;top:217px;font-size:14px">Polyline</div>
  <div class="t" style="left:30px;top:238px;font-size:14px">Quadr</div>
  <div class="t" style="left:30px;top:260px;font-size:14px">Separated</div>
  <div class="t" style="left:30px;top:281px;font-size:14px">Single</div>
  <div class="t" style="left:30px;top:302px;font-size:14px">[By ID/Extension]</div>
  <div class="t" style="left:30px;top:323px;font-size:14px">[By Material]</div>
  <div class="a" style="left:0;top:340px;width:170px;height:19px;overflow:hidden"><div class="t" style="left:30px;top:5px;font-size:14px">[By Name]</div></div>
  <div class="t" style="left:14px;top:363px;font-size:14px;font-weight:bold">Surface...</div>
 </div>
</div>

<!-- status -->
<div id="status" class="a">
 <svg class="a" style="left:1px;top:0" width="12" height="8"><path d="M2 1v5M5 1v5M8 1v5" stroke="#b0b0b0" stroke-width="1"/></svg>
 <div class="a" style="left:1480px;top:5px;width:129px;height:18px;background:#7c2812"></div>
 <div class="t" style="left:1487px;top:7px;font-size:15px;font-weight:bold;color:#fff;transform:scaleX(0.885);transform-origin:0 0">SELECTED MODE</div>
 <div class="t" style="left:1619px;top:7px;font-size:15px;font-weight:bold;color:#111">Auto</div>
 <div class="a" style="left:1614px;top:23px;width:43px;height:1px;background:#a8a8a8"></div>
 <div class="a" style="left:1657px;top:4px;width:1px;height:20px;background:#b0b0b0"></div>
 <div class="a" style="left:1662px;top:4px;width:236px;height:20px;border-top:1px solid #a8a8a8;border-left:1px solid #a8a8a8"></div>
 <div class="t" style="left:1667px;top:7px;font-size:15px;color:#111;transform:scaleX(0.875);transform-origin:0 0">Cursor: 0.13840, 0.39715, -0.40141</div>
 <svg class="a" style="left:1900px;top:8px" width="18" height="18"><g fill="#a0a0a0"><rect x="12" y="2" width="2" height="2"/><rect x="12" y="7" width="2" height="2"/><rect x="7" y="7" width="2" height="2"/><rect x="12" y="12" width="2" height="2"/><rect x="7" y="12" width="2" height="2"/><rect x="2" y="12" width="2" height="2"/></g></svg>
</div>

<!-- watermark -->
<div class="t" style="left:1486px;top:928px;font-size:25px;color:#b0b0b0;z-index:5">Windows'u Etkinleştir</div>
<div class="t" style="left:1486px;top:960px;font-size:18px;color:#b0b0b0;z-index:5">Windows'u etkinleştirmek için Ayarlar'a gidin.</div>

<!-- taskbar -->
<div id="task" class="a">
 <svg class="a" style="left:0;top:0" width="1920" height="50" viewBox="0 1030 1920 50">
  <!-- windows logo -->
  <path d="M19.5 1047l9-1.3v9h-9zM30 1045.5l10.5-1.5v11h-10.5zM19.5 1056h9v9l-9-1.3zM30 1056h10.5v9.5l-10.5-1.5z" fill="#f4f4f4"/>
  <!-- LFS -->
  <rect x="81" y="1041.5" width="26" height="25" rx="5" fill="#2a2a2a"/><path d="M82 1049q12-8 24 0v-4q-12-6-24 0z" fill="#808080"/>
  <path d="M88 1052l5-7h3l-6 13h-5z" fill="#40b0f0"/><path d="M96 1052h9l-2 3h-6l-1 2h6l-3 6h-9l1-2h6l1-2h-6z" fill="#f0c020"/>
  <!-- Ps -->
  <rect x="142" y="1041" width="27.5" height="26" rx="3" fill="#001e36"/>
  <!-- Zmodeler active -->
  <rect x="188" y="1030" width="61" height="50" fill="#2f2f2f"/><rect x="188" y="1077" width="61" height="3" fill="#a8a8a8"/>
  <rect x="203" y="1040" width="30" height="30" fill="#f7a000"/>
  <path d="M209 1045h18l-11 15h11v5h-19l11-15h-10z" fill="#7a4a10" transform="translate(2,2)"/>
  <path d="M209 1045h18l-11 15h11v5h-19l11-15h-10z" fill="#3a1a90" stroke="#c8c0e0" stroke-width="0.7"/>
  <!-- whatsapp -->
  <path d="M280 1041a14 14 0 1 1-7.5 25.8l-7.5 2.5 2.4-7.3a14 14 0 0 1 12.6-21z" fill="none" stroke="#25d366" stroke-width="2.8"/>
  <path d="M274 1049q1-2 3-1l2 4q0 1-1 2q2 4 6 6q1-1 2-1l3 2q1 2-1 3q-4 2-10-4q-5-6-4-11z" fill="#25d366"/>
  <!-- spotify -->
  <circle cx="342" cy="1055" r="14.8" fill="#1ed760"/>
  <path d="M333 1051q10-3 19 1M334.5 1055.5q8-2.5 15.5 1M336 1060q6-2 12 1" stroke="#101010" stroke-width="2.2" fill="none" stroke-linecap="round"/>
  <rect x="317" y="1077" width="51" height="3" fill="#a8a8a8"/>
  <!-- instagram -->
  <defs>
   <linearGradient id="ig" x1="0" y1="1" x2="1" y2="0"><stop offset="0" stop-color="#fdc830"/><stop offset="0.3" stop-color="#f56040"/><stop offset="0.6" stop-color="#c13584"/><stop offset="1" stop-color="#5851db"/></linearGradient>
   <linearGradient id="chr" x1="0" y1="0" x2="1" y2="1"><stop offset="0" stop-color="#db4437"/><stop offset="1" stop-color="#f4b400"/></linearGradient>
  </defs>
  <rect x="389" y="1040" width="30" height="30" rx="7" fill="url(#ig)"/>
  <rect x="393.5" y="1044.5" width="21" height="21" rx="5.5" fill="none" stroke="#fff" stroke-width="2.2"/>
  <circle cx="404" cy="1055" r="5" fill="none" stroke="#fff" stroke-width="2.2"/><circle cx="410.5" cy="1048.5" r="1.4" fill="#fff"/>
  <!-- discord -->
  <circle cx="466" cy="1055" r="15.2" fill="#5865f2"/>
  <path d="M457 1050q4-3 9-2q5-1 9 2q2 5 1 10q-2 2-5 2l-1-2h-8l-1 2q-3 0-5-2q-1-5 1-10z" fill="#fff"/>
  <circle cx="462" cy="1055" r="1.7" fill="#5865f2"/>
  <circle cx="472.8" cy="1061.5" r="9" fill="#e04848"/>
  <rect x="441" y="1077" width="51" height="3" fill="#a8a8a8"/>
  <!-- chrome -->
  <circle cx="528" cy="1055" r="15.2" fill="#0f9d58"/>
  <path d="M528 1055l-13.2-7.6a15.2 15.2 0 0 1 26.4 0z" fill="#db4437"/>
  <path d="M528 1055h15.2a15.2 15.2 0 0 1-15.2 15.2z" fill="#f4b400"/><path d="M528 1055l13.2-7.6a15.2 15.2 0 0 1 2 7.6z" fill="#f4b400"/>
  <circle cx="528" cy="1055" r="7" fill="#fff"/><circle cx="528" cy="1055" r="5.3" fill="#4285f4"/>
  <rect x="503" y="1077" width="51" height="3" fill="#a8a8a8"/>
  <!-- tray -->
  <path d="M1625.5 1059.5l7.5-7.5 7.5 7.5" fill="none" stroke="#f0f0f0" stroke-width="1.4"/>
  <circle cx="1663" cy="1055" r="7.8" fill="#17301f" stroke="#2f9a5a" stroke-width="1.3"/><path d="M1659 1058q0-5 5-6" stroke="#2a6a40" stroke-width="1" fill="none"/>
  <rect x="1686" y="1050.5" width="16" height="9" fill="none" stroke="#f0f0f0" stroke-width="1.3"/><rect x="1702.5" y="1053" width="1.5" height="4" fill="#f0f0f0"/><rect x="1687.5" y="1052" width="13" height="6" fill="#f0f0f0"/><path d="M1684 1046v5M1686 1046v5M1683 1049h4" stroke="#f0f0f0" stroke-width="1"/>
  <path d="M1716 1063q0-11 12-14M1719.5 1063q0-8 9-10M1723 1063q0-4.5 5.5-6" fill="none" stroke="#c8c8c8" stroke-width="1.3"/><circle cx="1729" cy="1061.5" r="1.5" fill="#f0f0f0"/>
  <path d="M1743.5 1051.5h4l5-4.5v17l-5-4.5h-4z" fill="none" stroke="#f0f0f0" stroke-width="1.2"/><path d="M1755 1052q2 3 0 6M1758 1049q4 6 0 12M1761.5 1047q5 8 0 16" fill="none" stroke="#f0f0f0" stroke-width="1.2"/>
  <path d="M1869.5 1045.5h19v14h-7l-3 3-3-3h-6z" fill="none" stroke="#f4f4f4" stroke-width="1.3"/>
  <rect x="1914" y="1030" width="1" height="50" fill="#505050"/>
 </svg>
 <div class="t" style="left:148px;top:16px;font-size:17px;font-weight:bold;color:#31a8ff;letter-spacing:-0.5px">Ps</div>
 <div class="t" style="left:467.5px;top:26px;font-size:10px;color:#fff">9+</div>
 <div class="t" style="left:1793px;top:7px;font-size:15px;color:#f0f0f0;transform:scaleX(0.9);transform-origin:0 0">13:56</div>
 <div class="t" style="left:1777px;top:30px;font-size:15px;color:#f0f0f0;transform:scaleX(0.91);transform-origin:0 0">11.08.2025</div>
</div>

</body></html>
